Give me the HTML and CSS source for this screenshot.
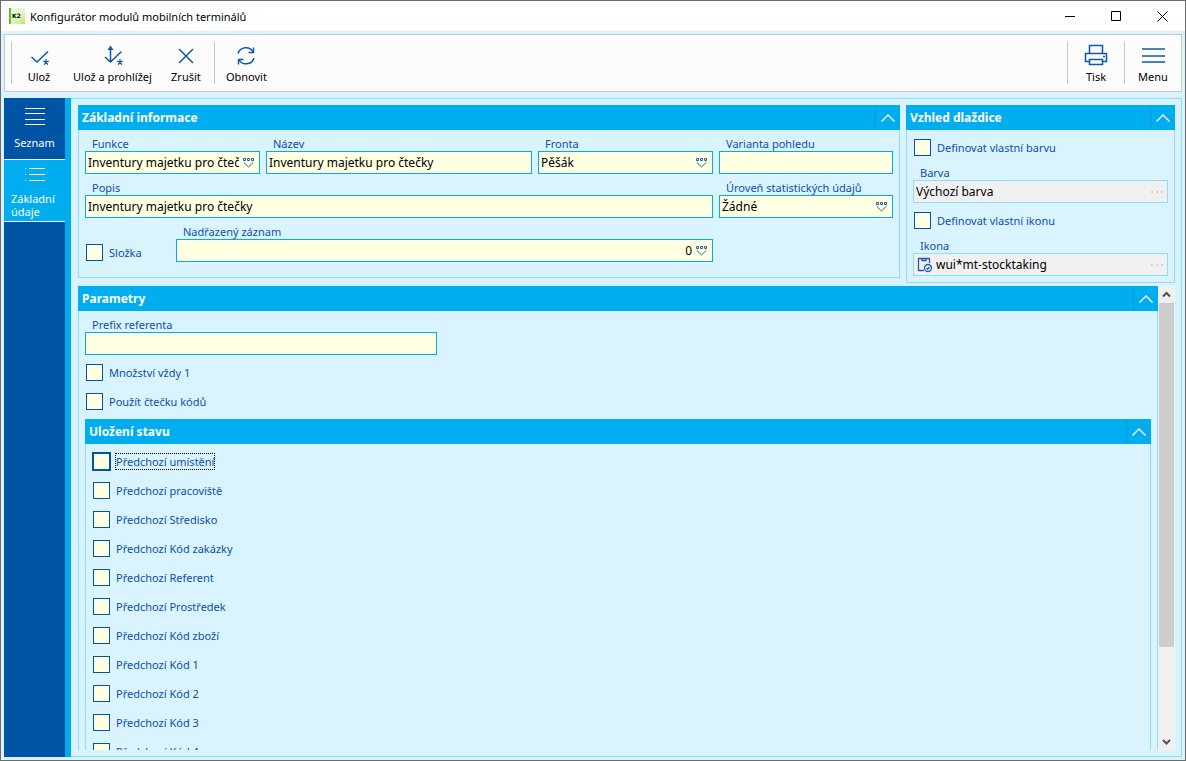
FILE: index.html
```html
<!DOCTYPE html>
<html lang="cs">
<head>
  <meta charset="UTF-8" />
  <meta name="viewport" content="width=device-width, initial-scale=1" />
  <title>Konfigurátor modulů mobilních terminálů</title>
  <link rel="stylesheet" href="styles.css">
</head>
<body>
  <!-- shared icons -->
  <svg class="defs" width="0" height="0">
    <symbol id="pick" viewBox="0 0 12 10">
      <path d="M.5.5h2v2h-2zM4.500.5h2v2h-2zM8.500.5h2v2h-2z" fill="none" stroke="#1c5fab" />
      <path d="M.7 4.300L5.500 9L10.300 4.300" fill="none" stroke="#1c5fab" />
    </symbol>
    <symbol id="up" viewBox="0 0 14 8">
      <path d="M.5 7.500L7 1L13.500 7.500" fill="none" stroke="#fff" stroke-width="1.3" />
    </symbol>
    <symbol id="star" viewBox="0 0 6 6">
      <path d="M3 3V0M3 3L.2 2.200M3 3L5.800 2.200M3 3L1.200 5.800M3 3L4.800 5.800" />
    </symbol>
  </svg>

  <header class="titlebar">
    <svg class="app-icon" width="16" height="16" viewBox="0 0 16 16">
      <defs>
        <linearGradient id="k2" x1="0" y1="0" x2="1" y2="1">
          <stop offset="0" stop-color="#f4f9ee" />
          <stop offset="0.600" stop-color="#e2f5c0" />
          <stop offset="1" stop-color="#b5e660" />
        </linearGradient>
      </defs>
      <rect width="16" height="16" fill="url(#k2)" />
      <rect width="2" height="16" fill="#4fd414" />
      <text x="3" y="10" font-family="DejaVu Sans" font-weight="bold" font-size="6">K2</text>
    </svg>
    <h1>Konfigurátor modulů mobilních terminálů</h1>
    <div class="win-buttons">
      <button aria-label="Minimalizovat"><svg width="11" height="11"><path d="M0 5.500h10" /></svg></button>
      <button aria-label="Maximalizovat"><svg width="11" height="11"><path d="M.5.5h9v9h-9z" /></svg></button>
      <button aria-label="Zavřít"><svg width="11" height="11"><path d="M.5.5l10 10M10.500.5l-10 10" /></svg></button>
    </div>
  </header>

  <nav class="toolbar">
    <div class="group">
      <button class="tool">
        <svg width="24" height="24" viewBox="0 0 24 24"><path d="M4.500 13l5.500 5L21 7.500" /><use class="star" href="#star" x="16" y="15" width="6" height="6" /></svg>
        Ulož
      </button>
      <button class="tool">
        <svg width="24" height="24" viewBox="0 0 24 24"><path d="M5 13l5.500 5L21.500 7.500M10.500 17V4" /><path class="solid" d="M10.500 1.500l3 4.500h-6z" /><use class="star" href="#star" x="17" y="15" width="6" height="6" /></svg>
        Ulož a prohlížej
      </button>
      <button class="tool">
        <svg width="24" height="24" viewBox="0 0 24 24"><path d="M5 5l14 14M19 5L5 19" /></svg>
        Zrušit
      </button>
    </div>
    <div class="group">
      <button class="tool">
        <svg width="24" height="24" viewBox="0 0 24 24"><path d="M4 9.500C6 2.500 16 1.500 19 8M20 14c-2 7-12 8-15 1.500" /><path d="M19.500 3.500v5h-5M4.500 20.500v-5h5" /></svg>
        Obnovit
      </button>
    </div>
    <div class="group right">
      <button class="tool">
        <svg width="24" height="24" viewBox="0 0 24 24"><path d="M5.500 9.500v-8h13v8M5.500 17.500h-4v-8h21v8h-4M5.500 15.500h13v5h-13z" /><path d="M19 12.500h2" /></svg>
        Tisk
      </button>
    </div>
    <div class="group right">
      <button class="tool">
        <svg width="24" height="24" viewBox="0 0 24 24"><path d="M1 5h23M1 12h23M1 18h23" /></svg>
        Menu
      </button>
    </div>
  </nav>

  <div class="workspace">
    <aside class="sidebar">
      <a href="#" class="side-item">
        <svg width="20" height="18"><path d="M0 .5h20M0 5.500h20M0 11.500h20M0 16.500h20" /></svg>
        <span>Seznam</span>
      </a>
      <a href="#" class="side-item active">
        <svg width="20" height="18"><path d="M0 2.500h1M4 2.500h16M0 8.500h1M4 8.500h16M0 14.500h1M4 14.500h16" /></svg>
        <span>Základní údaje</span>
      </a>
    </aside>

    <main class="content">
      <div class="top">
        <section class="panel info">
          <header><h2>Základní informace</h2><button class="fold" aria-label="Sbalit"><svg width="14" height="8"><use href="#up" /></svg></button></header>
          <div class="panel-body info-grid">
            <div class="field">
              <label for="funkce">Funkce</label>
              <div class="box">
                <select id="funkce"><option>Inventury majetku pro čtečky</option></select>
                <svg width="12" height="10"><use href="#pick" /></svg>
              </div>
            </div>
            <div class="field">
              <label for="nazev">Název</label>
              <div class="box"><input type="text" id="nazev" value="Inventury majetku pro čtečky"></div>
            </div>
            <div class="field">
              <label for="fronta">Fronta</label>
              <div class="box">
                <select id="fronta"><option>Pěšák</option></select>
                <svg width="12" height="10"><use href="#pick" /></svg>
              </div>
            </div>
            <div class="field">
              <label for="varianta">Varianta pohledu</label>
              <div class="box"><input type="text" id="varianta"></div>
            </div>
            <div class="field wide">
              <label for="popis">Popis</label>
              <div class="box"><input type="text" id="popis" value="Inventury majetku pro čtečky"></div>
            </div>
            <div class="field">
              <label for="uroven">Úroveň statistických údajů</label>
              <div class="box">
                <select id="uroven"><option>Žádné</option></select>
                <svg width="12" height="10"><use href="#pick" /></svg>
              </div>
            </div>
            <div class="wide parent-row">
              <label class="check"><input type="checkbox"><span>Složka</span></label>
              <div class="field">
                <label for="nadrazeny">Nadřazený záznam</label>
                <div class="box">
                  <input type="text" id="nadrazeny" class="num" value="0">
                  <svg width="12" height="10"><use href="#pick" /></svg>
                </div>
              </div>
            </div>
          </div>
        </section>

        <section class="panel tile">
          <header><h2>Vzhled dlaždice</h2><button class="fold" aria-label="Sbalit"><svg width="14" height="8"><use href="#up" /></svg></button></header>
          <div class="panel-body stack">
            <label class="check"><input type="checkbox"><span>Definovat vlastní barvu</span></label>
            <div class="field">
              <label for="barva">Barva</label>
              <div class="box readonly">
                <input type="text" id="barva" value="Výchozí barva" readonly>
                <svg width="12" height="2"><path d="M0 1h2M5 1h2M10 1h2" stroke="#d4d4d4" stroke-width="2" /></svg>
              </div>
            </div>
            <label class="check"><input type="checkbox"><span>Definovat vlastní ikonu</span></label>
            <div class="field">
              <label for="ikona">Ikona</label>
              <div class="box readonly">
                <svg class="lead" width="16" height="16" viewBox="0 0 16 16"><path d="M7 13.500H1.500v-12h11V6M5 1.500v2h4v-2" /><circle cx="11" cy="11" r="3.500" /><path d="M9.500 11l1.200 1.200 2-2.200" /></svg>
                <input type="text" id="ikona" value="wui*mt-stocktaking" readonly>
                <svg width="12" height="2"><path d="M0 1h2M5 1h2M10 1h2" stroke="#d4d4d4" stroke-width="2" /></svg>
              </div>
            </div>
          </div>
        </section>
      </div>

      <div class="scroll-area">
        <div class="viewport">
          <section class="panel">
            <header><h2>Parametry</h2><button class="fold" aria-label="Sbalit"><svg width="14" height="8"><use href="#up" /></svg></button></header>
            <div class="panel-body stack">
              <div class="field prefix">
                <label for="prefix">Prefix referenta</label>
                <div class="box"><input type="text" id="prefix"></div>
              </div>
              <div class="checks">
                <label class="check"><input type="checkbox"><span>Množství vždy 1</span></label>
                <label class="check"><input type="checkbox"><span>Použít čtečku kódů</span></label>
              </div>
              <section class="panel">
                <header><h2>Uložení stavu</h2><button class="fold" aria-label="Sbalit"><svg width="14" height="8"><use href="#up" /></svg></button></header>
                <div class="panel-body stack">
                  <div class="checks">
                    <label class="check focused"><input type="checkbox"><span>Předchozí umístění</span></label>
                    <label class="check"><input type="checkbox"><span>Předchozí pracoviště</span></label>
                    <label class="check"><input type="checkbox"><span>Předchozí Středisko</span></label>
                    <label class="check"><input type="checkbox"><span>Předchozí Kód zakázky</span></label>
                    <label class="check"><input type="checkbox"><span>Předchozí Referent</span></label>
                    <label class="check"><input type="checkbox"><span>Předchozí Prostředek</span></label>
                    <label class="check"><input type="checkbox"><span>Předchozí Kód zboží</span></label>
                    <label class="check"><input type="checkbox"><span>Předchozí Kód 1</span></label>
                    <label class="check"><input type="checkbox"><span>Předchozí Kód 2</span></label>
                    <label class="check"><input type="checkbox"><span>Předchozí Kód 3</span></label>
                    <label class="check"><input type="checkbox"><span>Předchozí Kód 4</span></label>
                  </div>
                </div>
              </section>
            </div>
          </section>
        </div>
        <div class="scrollbar">
          <svg width="17" height="17"><path d="M5 10.500l3.500-3.500 3.500 3.500" /></svg>
          <div class="track"><div class="thumb"></div></div>
          <svg width="17" height="17"><path d="M5 7l3.500 3.500L12 7" /></svg>
        </div>
      </div>
    </main>
  </div>
</body>
</html>
```
FILE: styles.css
```css
* {
  box-sizing: border-box;
}
body {
  margin: 0;
  height: 100vh;
  display: flex;
  flex-direction: column;
  overflow: hidden;
  border: 1px solid #6b6b6b;
  background-color: #d9f3ff;
  font-family: "Noto Sans", "Open Sans", sans-serif;
  font-size: 11px;
  color: #000;
}
button, input, select {
  font: inherit;
  color: inherit;
  margin: 0;
}
button {
  background: none;
  border: none;
  padding: 0;
}
svg {
  display: block;
  flex: none;
}
.defs {
  position: absolute;
}

/* title bar */
.titlebar {
  display: flex;
  align-items: center;
  height: 30px;
  flex: none;
  padding-left: 8px;
  background-color: #fff;
}
.titlebar h1 {
  flex: 1;
  margin: 0 0 0 5px;
  font-size: 11px;
  font-weight: normal;
}
.win-buttons {
  display: flex;
}
.win-buttons button {
  width: 46px;
  height: 30px;
  display: flex;
  align-items: center;
  justify-content: center;
}
.win-buttons path {
  fill: none;
  stroke: #000;
}

/* toolbar */
.toolbar {
  display: flex;
  flex: none;
  height: 58px;
  margin: 3px 3px 6px;
  padding: 7px 0;
  border: 1px solid #c8c8c8;
  background-color: #fcfcfc;
}
.group {
  display: flex;
  border-left: 1px solid #c8c8c8;
  margin-left: 3px;
  padding-left: 2px;
}
.group:first-child {
  margin-left: 6px;
}
.group.right {
  margin-left: auto;
  padding-left: 0;
}
.group.right + .right {
  margin-left: 0;
}
.tool {
  display: flex;
  flex-direction: column;
  align-items: center;
  min-width: 50px;
  padding: 2px 9px 0;
  line-height: 18px;
  white-space: nowrap;
}
.right .tool {
  min-width: 56px;
}
.tool path {
  fill: none;
  stroke: #0f58a8;
  stroke-width: 1.5;
}
.tool .solid {
  fill: #0f58a8;
  stroke: none;
}
.star {
  fill: none;
  stroke: #0f58a8;
  stroke-width: 1.2;
}

/* sidebar */
.workspace {
  display: flex;
  flex: 1;
  min-height: 0;
  margin: 0 3px 3px;
}
.sidebar {
  flex: none;
  width: 67px;
  background-color: #0054a6;
  border-right: 6px solid #00adef;
}
.side-item {
  display: flex;
  flex-direction: column;
  align-items: center;
  height: 62px;
  padding: 10px 7px 0;
  border-bottom: 1px solid #fff;
  color: #fff;
  font-size: 11px;
  line-height: 13px;
  text-decoration: none;
}
.side-item svg {
  margin-bottom: 10px;
}
.side-item path {
  stroke: #fff;
}
.side-item.active {
  padding-top: 6px;
  background-color: #00adef;
}
.side-item.active svg {
  margin-bottom: 8px;
}

/* content */
.content {
  flex: 1;
  min-width: 0;
  display: flex;
  flex-direction: column;
  gap: 3px;
  padding: 6px 6px 6px 7px;
  border: 1px solid #8fdcff;
  border-left: none;
}
.top {
  display: flex;
  align-items: flex-start;
  gap: 6px;
}
.info {
  flex: 822;
}
.tile {
  flex: 269;
}
.panel header {
  display: flex;
  align-items: center;
  height: 25px;
  padding-left: 4px;
  background-color: #00adef;
}
.panel h2 {
  flex: 1;
  margin: 0;
  font-size: 12px;
  font-weight: bold;
  color: #fff;
}
.fold {
  display: flex;
  align-items: center;
  justify-content: center;
  width: 25px;
  height: 21px;
  border-left: 1px solid #0095d6;
}
.panel-body {
  border: 1px solid #8fdcff;
  border-top: none;
  padding: 6px;
}
.info-grid {
  display: grid;
  grid-template-columns: 175fr 266fr 175fr 174fr;
  gap: 6px;
  padding-bottom: 15px;
}
.wide {
  grid-column: span 3;
}
.stack {
  display: flex;
  flex-direction: column;
  gap: 3px;
  padding-top: 3px;
}

/* fields */
.field {
  min-width: 0;
}
.field label {
  display: block;
  padding-left: 7px;
  line-height: 15px;
  color: #0f4fa8;
}
.box {
  display: flex;
  align-items: center;
  height: 23px;
  padding: 0 4px 0 2px;
  border: 1px solid #00adef;
  background-color: #ffffe1;
  font-size: 12px;
}
.box input,
.box select {
  flex: 1;
  min-width: 0;
  height: 21px;
  padding: 0;
  border: none;
  outline: none;
  background: none;
  appearance: none;
}
.box .num {
  text-align: right;
}
.box input + svg,
.box select + svg {
  margin-left: 4px;
}
.box.readonly {
  border-color: #8fdcff;
  background-color: #f0f0f0;
}
.lead {
  margin: 0 3px 0 1px;
  fill: none;
  stroke: #1c5fab;
  stroke-width: 1.3;
}
.parent-row {
  display: flex;
  align-items: flex-end;
  gap: 6px;
}
.parent-row .check {
  width: 85px;
  height: 19px;
}
.parent-row .field {
  flex: 1;
}
.prefix {
  width: 33%;
  padding-top: 3px;
}

/* tick boxes */
.check {
  display: flex;
  align-items: center;
  gap: 6px;
  height: 29px;
  padding-left: 1px;
  color: #0f4fa8;
}
.check input {
  appearance: none;
  flex: none;
  width: 17px;
  height: 17px;
  border: 1px solid #0054a6;
  background-color: #ffffe1;
}
.check.focused {
  gap: 5px;
  padding-left: 0;
}
.check.focused input {
  width: 19px;
  height: 19px;
  border-width: 2px;
}
.check.focused span {
  outline: 1px dotted #000;
}

/* scrolling part */
.scroll-area {
  flex: 1;
  min-height: 0;
  display: flex;
}
.viewport {
  flex: 1;
  overflow: hidden;
}
.scrollbar {
  display: flex;
  flex-direction: column;
  width: 17px;
  background-color: #f0f0f0;
}
.scrollbar path {
  fill: none;
  stroke: #505050;
  stroke-width: 2;
}
.track {
  flex: 1;
  padding: 0 1px;
}
.thumb {
  height: 80%;
  background-color: #cdcdcd;
}
```
